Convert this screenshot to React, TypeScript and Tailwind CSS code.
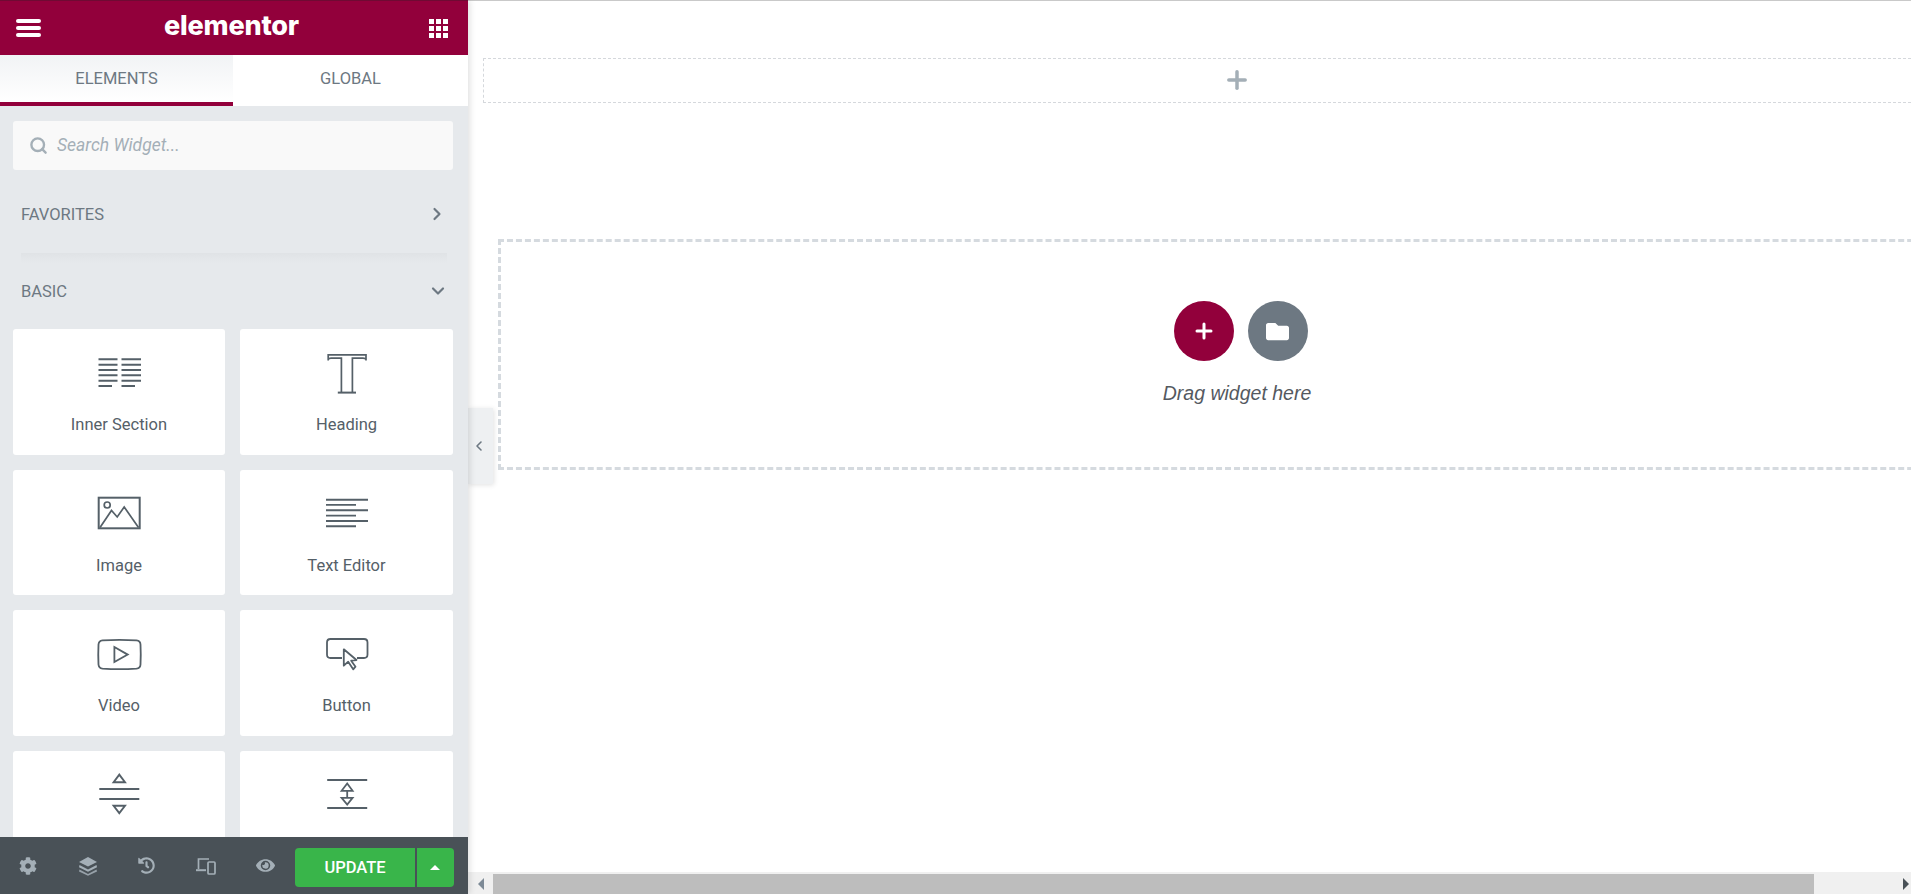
import { ReactNode } from "react";
import { ChevronDown, ChevronLeft, ChevronRight, Plus, Search } from "lucide-react";
import { FaCog, FaEye, FaFolder, FaHistory } from "react-icons/fa";

const InnerSectionIcon = () => (
  <svg width="48" height="48" viewBox="0 0 48 48" fill="none" stroke="#556068" strokeWidth="1.9">
    <path d="M3.5 10.3H22.5M3.5 15.7H22.5M3.5 21H22.5M3.5 26.3H22.5M3.5 31.7H22.5M3.5 37H17" />
    <path d="M26.5 10.3H46M26.5 15.7H46M26.5 21H46M26.5 26.3H46M26.5 31.7H46M26.5 37H40" />
  </svg>
);

const HeadingIcon = () => (
  <svg width="48" height="48" viewBox="0 0 48 48" fill="none" stroke="#556068" strokeWidth="1.7">
    <path d="M5.2 11.5V5.8H43V11.5M5.2 10.5Q5.8 9.2 8 9.2H18.4V43M43 10.5Q42.4 9.2 40 9.2H29.4V43" />
    <path d="M14.8 43.6H33" strokeWidth="2" />
  </svg>
);

const ImageIcon = () => (
  <svg width="48" height="48" viewBox="0 0 48 48" fill="none" stroke="#556068" strokeWidth="1.7">
    <rect x="3.7" y="7.7" width="41" height="30.6" strokeWidth="2" />
    <circle cx="12.2" cy="15" r="3" />
    <path d="M5 37.5L16.5 20.5L22.2 27L29.2 17L43.5 37.5" />
  </svg>
);

const TextEditorIcon = () => (
  <svg width="48" height="48" viewBox="0 0 48 48" fill="none" stroke="#556068" strokeWidth="1.9">
    <path d="M3 9.7H45M3 14.9H33M3 20.2H45M3 25.6H33M3 31H45M3 36.3H33" />
  </svg>
);

const VideoIcon = () => (
  <svg width="48" height="48" viewBox="0 0 48 48" fill="none" stroke="#556068" strokeWidth="1.8">
    <path d="M7.5 10.4Q24.5 9.4 41.5 10.4Q45.4 10.8 45.5 14.5Q46 24.5 45.5 34.5Q45.4 38.2 41.5 38.6Q24.5 39.6 7.5 38.6Q3.8 38.2 3.5 34.5Q3 24.5 3.5 14.5Q3.8 10.8 7.5 10.4Z" />
    <path d="M19.4 17V32L32.7 24.6Z" />
  </svg>
);

const ButtonIcon = () => (
  <svg width="48" height="48" viewBox="0 0 48 48" fill="none" stroke="#556068" strokeWidth="1.8">
    <path d="M19 28H7.5Q4 28 4 24.5V12.5Q4 9 7.5 9H41Q44.5 9 44.5 12.5V24.5Q44.5 28 41 28H34" />
    <path d="M20.8 19.3L33.5 30L28.2 30.7L32.5 36.7L30.2 39.3L25.2 31.7L20.8 35.7Z" strokeLinejoin="round" />
  </svg>
);

const DividerIcon = () => (
  <svg width="48" height="48" viewBox="0 0 48 48" fill="none" stroke="#556068" strokeWidth="1.9">
    <path d="M4.3 18H44.3M4.3 28H44.3" />
    <path d="M24.3 3.6L30 11.2H18.6Z" />
    <path d="M18.6 34.8H30L24.3 42.2Z" />
  </svg>
);

const SpacerIcon = () => (
  <svg width="48" height="48" viewBox="0 0 48 48" fill="none" stroke="#556068" strokeWidth="1.8">
    <path d="M4.2 9H44.2M4.2 37H44.2" />
    <path d="M24.2 12.5L29.6 19.8H18.6Z" />
    <path d="M18.6 26.8H29.6L24.2 33.6Z" />
    <path d="M24.2 19.8V26.8" />
  </svg>
);

const LayersIcon = () => (
  <svg width="20" height="20" viewBox="0 0 20 20" fill="#a4afb7">
    <path d="M10 1L19 6L10 10.6L1 6Z" />
    <path d="M1.5 9L10 13.4L18.5 9L19 11.2L10 15.8L1 11.2Z" />
    <path d="M1.5 13.6L10 18L18.5 13.6L19 15.4L10 19.8L1 15.4Z" opacity="0.85" />
  </svg>
);

const ResponsiveIcon = () => (
  <svg width="20" height="18" viewBox="0 0 20 18" fill="none" stroke="#a4afb7" strokeWidth="1.7">
    <path d="M2.5 12V2H13" />
    <path d="M0 13.2H10" strokeWidth="2" />
    <rect x="12" y="5" width="7" height="12" rx="1" />
  </svg>
);

type WidgetItem = { title?: string; icon: ReactNode };

const widgets: WidgetItem[] = [
  { title: "Inner Section", icon: <InnerSectionIcon /> },
  { title: "Heading", icon: <HeadingIcon /> },
  { title: "Image", icon: <ImageIcon /> },
  { title: "Text Editor", icon: <TextEditorIcon /> },
  { title: "Video", icon: <VideoIcon /> },
  { title: "Button", icon: <ButtonIcon /> },
  { icon: <DividerIcon /> },
  { icon: <SpacerIcon /> },
];

const Sidebar = () => {
  return (
    <aside className="relative z-10 flex h-full w-[468px] shrink-0 flex-col bg-[#e6e9ec] font-['Roboto',sans-serif] shadow-[2px_0_6px_rgba(0,0,0,0.12)]">
      {/* Header */}
      <header className="flex h-[55px] shrink-0 items-center justify-between border-t border-t-[#6f0a33] bg-[#92003b] pl-4 pr-5">
        <div className="flex w-[25px] flex-col gap-[3px]">
          <span className="h-[4px] rounded-full bg-white" />
          <span className="h-[4px] rounded-full bg-white" />
          <span className="h-[4px] rounded-full bg-white" />
        </div>
        <span className="mr-[7px] -mt-[5px] font-['Inter',sans-serif] text-[27px] leading-none font-extrabold tracking-[-0.2px] text-white">
          elementor
        </span>
        <div className="grid grid-cols-3 gap-[2px]">
          {[1, 2, 3, 4, 5, 6, 7, 8, 9].map((cell) => (
            <span className="h-[5px] w-[5px] bg-white" key={cell} />
          ))}
        </div>
      </header>

      {/* Tabs */}
      <div className="flex h-[51px] shrink-0 bg-white text-[16.5px] text-[#6d7882]">
        <div className="flex w-[233px] items-center justify-center border-b-4 border-b-[#92003b] bg-gradient-to-b from-[#f1f3f5] to-white pt-[2px]">
          ELEMENTS
        </div>
        <div className="flex flex-1 items-center justify-center pb-[3px]">GLOBAL</div>
      </div>

      {/* Widgets */}
      <div className="min-h-0 flex-1 overflow-hidden px-[13px]">
        <div className="mt-[15px] flex h-[49px] w-[440px] items-center gap-[9px] rounded-[3px] bg-[#f9f9f9] pl-4">
          <Search size={19} strokeWidth={3} className="text-[#a4afb7]" />
          <span className="text-[17.5px] text-[#a4afb7] italic">Search Widget...</span>
        </div>

        <div className="mt-[20px] flex h-[48px] items-center justify-between pl-2 pr-[8px] text-[16.5px] text-[#6d7882]">
          <span className="mt-[2px]">FAVORITES</span>
          <ChevronRight size={20} strokeWidth={2.6} />
        </div>
        <div className="mx-2 mt-[15px] h-[10px] bg-gradient-to-b from-[#e0e3e6] to-[#e6e9ec]" />
        <div className="mt-1 flex h-[48px] items-center justify-between pl-2 pr-[7px] text-[16.5px] text-[#6d7882]">
          <span className="mt-[2px]">BASIC</span>
          <ChevronDown size={20} strokeWidth={2.6} />
        </div>

        <div className="mt-[14px] grid w-[440px] grid-cols-[212px_213px] gap-x-[15px] gap-y-[15px]">
          {widgets.map((widget, i) => (
            <div
              className="flex h-[125.67px] flex-col items-center rounded-[3px] bg-white pt-5"
              key={i}
            >
              {widget.icon}
              {widget.title && (
                <span className="mt-[17px] text-[16.5px] leading-[22px] text-[#556068]">{widget.title}</span>
              )}
            </div>
          ))}
        </div>
      </div>

      {/* Footer */}
      <footer className="flex h-[57px] shrink-0 items-center bg-[#495157] pl-[18px] pr-[14px]">
        <div className="flex w-[277px] items-center">
          <div className="flex w-[59px] justify-start pl-px">
            <FaCog size={18} color="#a4afb7" />
          </div>
          <div className="flex w-[59px] justify-start pl-[1px]">
            <LayersIcon />
          </div>
          <div className="flex w-[60px] justify-start pl-[2px]">
            <FaHistory size={17} color="#a4afb7" />
          </div>
          <div className="flex w-[59px] justify-start">
            <ResponsiveIcon />
          </div>
          <div className="flex justify-start pl-px">
            <FaEye size={19} color="#a4afb7" />
          </div>
        </div>
        <div className="mt-[3px] flex h-[39px] flex-1 gap-[2px]">
          <button className="flex-1 rounded-l-[4px] bg-[#39b54a] pt-[2px] text-[16.5px] font-medium text-white">UPDATE</button>
          <button className="flex w-[37px] items-center justify-center rounded-r-[4px] bg-[#39b54a]">
            <span className="mr-[2px] h-0 w-0 border-x-[5px] border-b-[5px] border-x-transparent border-b-white" />
          </button>
        </div>
      </footer>
    </aside>
  );
};

const Canvas = () => {
  return (
    <main className="relative flex h-full min-w-0 flex-1 flex-col overflow-hidden border-t border-t-[#c9c9c9] bg-white">
      {/* Collapse handle */}
      <div className="absolute top-[407px] left-0 z-0 flex h-[76px] w-[25px] items-center justify-center bg-[#eef0f2] pr-[4px] shadow-[1px_1px_5px_rgba(0,0,0,0.12)]">
        <ChevronLeft size={16} strokeWidth={2.4} className="text-[#6d7882]" />
      </div>

      <div className="min-h-0 flex-1 overflow-hidden">
        <div className="mt-[57px] ml-[15px] flex h-[45px] w-[1508px] items-center justify-center border border-dashed border-[#d5d8dc] pb-[2px]">
          <Plus size={28} strokeWidth={3} className="text-[#a4afb7]" />
        </div>

        <div className="mt-[136px] ml-[30px] flex h-[231px] w-[1478px] flex-col items-center border-[3px] border-dashed border-[#d5dadf] pt-[59px]">
          <div className="ml-[7px] flex gap-[14px]">
            <div className="flex h-[60px] w-[60px] items-center justify-center rounded-full bg-[#92003b]">
              <Plus size={24} strokeWidth={3} className="text-white" />
            </div>
            <div className="flex h-[60px] w-[60px] items-center justify-center rounded-full bg-[#6d7882]">
              <FaFolder size={23} className="text-white" />
            </div>
          </div>
          <p className="mt-[19px] font-['Liberation_Sans',sans-serif] text-[19.5px] leading-[27px] text-[#54595f] italic">
            Drag widget here
          </p>
        </div>
      </div>

      {/* Horizontal scrollbar */}
      <div className="flex h-[22px] shrink-0 items-end bg-[#f0f0f0]">
        <div className="flex h-[20px] w-[25px] items-center justify-center">
          <span className="h-0 w-0 border-y-[6px] border-r-[6px] border-y-transparent border-r-[#7d8a96]" />
        </div>
        <div className="h-[20px] w-[1321px] bg-[#bdbdbd]" />
        <div className="flex h-[20px] flex-1 items-center justify-end pr-[2px]">
          <span className="h-0 w-0 border-y-[6px] border-l-[6px] border-y-transparent border-l-[#495157]" />
        </div>
      </div>
    </main>
  );
};

const App = () => {
  return (
    <div className="flex h-screen w-full overflow-hidden bg-white">
      <Sidebar />
      <Canvas />
    </div>
  );
};

export default App;
